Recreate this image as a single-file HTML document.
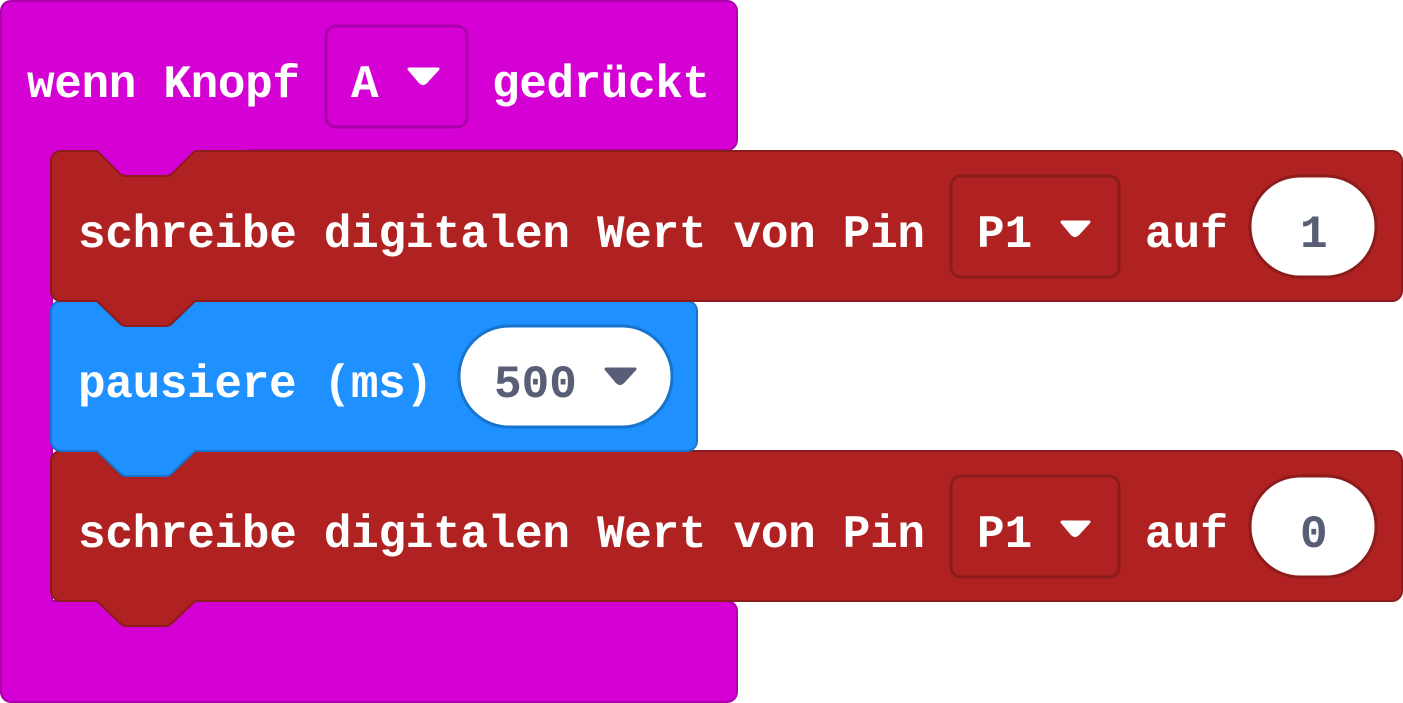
<!DOCTYPE html>
<html><head><meta charset="utf-8"><style>
html,body{margin:0;padding:0;background:#fff;width:1403px;height:703px;overflow:hidden}
text{font-family:"Liberation Mono","DejaVu Sans Mono",monospace;font-weight:bold;font-size:46px}
</style></head><body>
<svg width="1403" height="703" viewBox="0 0 1403 703" xmlns="http://www.w3.org/2000/svg">
<!-- hat block -->
<path d="M1,11 a10,10 0 0 1 10,-10 H727 a10,10 0 0 1 10,10 V140 a10,10 0 0 1 -10,10 H52 V601 H727 a10,10 0 0 1 10,10 V692 a10,10 0 0 1 -10,10 H11 a10,10 0 0 1 -10,-10 Z" fill="#d400d4" stroke="#a900a9" stroke-width="2"/>
<rect x="50" y="140" width="200" height="45" fill="#d400d4"/>
<text x="27" y="97" fill="#fff" textLength="273">wenn Knopf</text>
<rect x="326" y="26" width="141" height="101" rx="10" fill="#d400d4" stroke="#a900a9" stroke-width="3"/>
<text x="351" y="97" fill="#fff">A</text>
<path d="M409,69 H438 L426,82 Q423,85 420,82 Z" fill="#fff" stroke="#fff" stroke-width="3" stroke-linejoin="round"/>
<text x="492" y="97" fill="#fff" textLength="218">gedrückt</text>

<path d="M51,461 a10,10 0 0 1 10,-10 H97 L120,474 Q123,476 126,476 H166 Q169,476 172,474 L195,451 H1392 a10,10 0 0 1 10,10 V591 a10,10 0 0 1 -10,10 H195 L172,623 Q169,626 166,626 H126 Q123,626 120,623 L97,601 H61 a10,10 0 0 1 -10,-10 Z" fill="#b02222" stroke="#8c1b1b" stroke-width="2"/>
<path d="M51,311 a10,10 0 0 1 10,-10 H97 L120,324 Q123,326 126,326 H166 Q169,326 172,324 L195,301 H687 a10,10 0 0 1 10,10 V441 a10,10 0 0 1 -10,10 H195 L172,473 Q169,476 166,476 H126 Q123,476 120,473 L97,451 H61 a10,10 0 0 1 -10,-10 Z" fill="#1e90ff" stroke="#1873cc" stroke-width="2"/>
<path d="M51,161 a10,10 0 0 1 10,-10 H97 L120,174 Q123,176 126,176 H166 Q169,176 172,174 L195,151 H1392 a10,10 0 0 1 10,10 V291 a10,10 0 0 1 -10,10 H195 L172,323 Q169,326 166,326 H126 Q123,326 120,323 L97,301 H61 a10,10 0 0 1 -10,-10 Z" fill="#b02222" stroke="#8c1b1b" stroke-width="2"/>

<text x="78" y="247" fill="#fff" textLength="847">schreibe digitalen Wert von Pin</text>
<rect x="951" y="176" width="168" height="101" rx="10" fill="#b02222" stroke="#8c1b1b" stroke-width="3"/>
<text x="977" y="247" fill="#fff">P1</text>
<path d="M1062,222 H1089 L1078,234 Q1075,237 1072,234 Z" fill="#fff" stroke="#fff" stroke-width="3" stroke-linejoin="round"/>
<text x="1145" y="247" fill="#fff">auf</text>
<rect x="1250" y="176" width="126" height="101" rx="50" fill="#fff" stroke="#8c1b1b" stroke-width="3"/>
<text x="1300" y="247" fill="#575e75">1</text>

<text x="78" y="397" fill="#fff" textLength="355">pausiere (ms)</text>
<rect x="459" y="326" width="213" height="101" rx="50" fill="#fff" stroke="#1873cc" stroke-width="3"/>
<text x="494" y="397" fill="#575e75">500</text>
<path d="M606,369 H635 L623,382 Q620,385 617,382 Z" fill="#575e75" stroke="#575e75" stroke-width="3" stroke-linejoin="round"/>

<text x="78" y="547" fill="#fff" textLength="847">schreibe digitalen Wert von Pin</text>
<rect x="951" y="476" width="168" height="101" rx="10" fill="#b02222" stroke="#8c1b1b" stroke-width="3"/>
<text x="977" y="547" fill="#fff">P1</text>
<path d="M1062,522 H1089 L1078,534 Q1075,537 1072,534 Z" fill="#fff" stroke="#fff" stroke-width="3" stroke-linejoin="round"/>
<text x="1145" y="547" fill="#fff">auf</text>
<rect x="1250" y="476" width="126" height="101" rx="50" fill="#fff" stroke="#8c1b1b" stroke-width="3"/>
<text x="1300" y="547" fill="#575e75">0</text>
</svg>
</body></html>
